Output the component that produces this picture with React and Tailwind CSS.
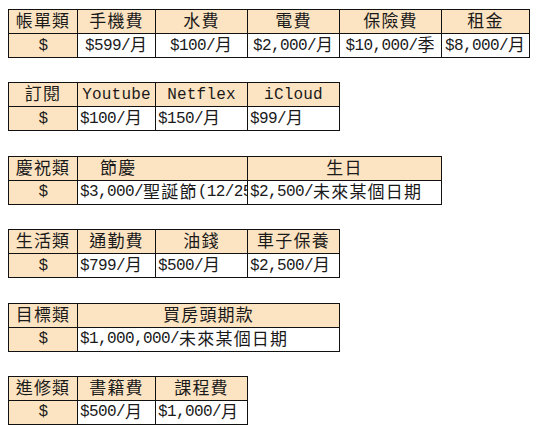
const PEACH = 'bg-[#fce4c2]'

// 把文字拆成中文段與半形段，半形段用等寬字型（仿細明體）
function Txt({ s, head }) {
  const runs = []
  s.split('').forEach((c) => {
    const lat = c.charCodeAt(0) < 256
    const last = runs[runs.length - 1]
    if (last && last.lat === lat) last.t += c
    else runs.push({ lat, t: c })
  })
  return runs.map((r, i) =>
    r.lat ? (
      <span
        key={i}
        className={
          head
            ? "font-['Liberation_Mono',monospace] text-[16px] tracking-[0.2px]"
            : "font-['Liberation_Mono',monospace] text-[16px] tracking-[-0.6px]"
        }
      >
        {r.t}
      </span>
    ) : (
      <span key={i} className="text-[17px] tracking-[1.2px]">
        {r.t}
      </span>
    )
  )
}

function Cell({ children, bg, align = 'center', pl }) {
  const a = align === 'left' ? 'justify-start pl-[2px]' : 'justify-center'
  return (
    <div className={`h-[24px] border-r border-b border-[#111] flex items-center overflow-hidden whitespace-nowrap ${bg ? PEACH : 'bg-white'} ${a} ${pl || ''}`}>
      {children}
    </div>
  )
}

function Sheet({ cols, heads, vals, dataAlign = 'left', headPad }) {
  return (
    <div className={`grid border-l border-t border-[#111] w-fit ${cols}`}>
      {heads.map((h, i) => (
        <Cell key={'h' + i} bg align={headPad && headPad[i] ? 'left' : 'center'} pl={headPad && headPad[i]}>
          <Txt s={h} head />
        </Cell>
      ))}
      <Cell bg>
        <Txt s="$" />
      </Cell>
      {vals.map((v, i) => (
        <Cell key={'v' + i} align={dataAlign}>
          <Txt s={v} />
        </Cell>
      ))}
    </div>
  )
}

export default function App() {
  return (
    <div className="w-[539px] h-[439px] bg-white text-[#1a1a1a] pl-[8px] pt-[9px] flex flex-col gap-[24.4px] leading-none font-['Liberation_Serif','Noto_Sans_CJK_TC',serif]">
      <Sheet
        cols="grid-cols-[69px_78px_92px_92px_102px_88px]"
        heads={['帳單類', '手機費', '水費', '電費', '保險費', '租金']}
        vals={['$599/月', '$100/月', '$2,000/月', '$10,000/季', '$8,000/月']}
        dataAlign="center"
      />
      <Sheet
        cols="grid-cols-[69px_78px_92px_92px]"
        heads={['訂閱', 'Youtube', 'Netflex', 'iCloud']}
        vals={['$100/月', '$150/月', '$99/月']}
      />
      <Sheet
        cols="grid-cols-[69px_170px_194px]"
        heads={['慶祝類', '節慶', '生日']}
        headPad={[null, '!pl-[22px]', null]}
        vals={['$3,000/聖誕節(12/25)', '$2,500/未來某個日期']}
      />
      <Sheet
        cols="grid-cols-[69px_78px_92px_92px]"
        heads={['生活類', '通勤費', '油錢', '車子保養']}
        vals={['$799/月', '$500/月', '$2,500/月']}
      />
      <Sheet
        cols="grid-cols-[69px_262px]"
        heads={['目標類', '買房頭期款']}
        vals={['$1,000,000/未來某個日期']}
      />
      <Sheet
        cols="grid-cols-[69px_78px_92px]"
        heads={['進修類', '書籍費', '課程費']}
        vals={['$500/月', '$1,000/月']}
      />
    </div>
  )
}
